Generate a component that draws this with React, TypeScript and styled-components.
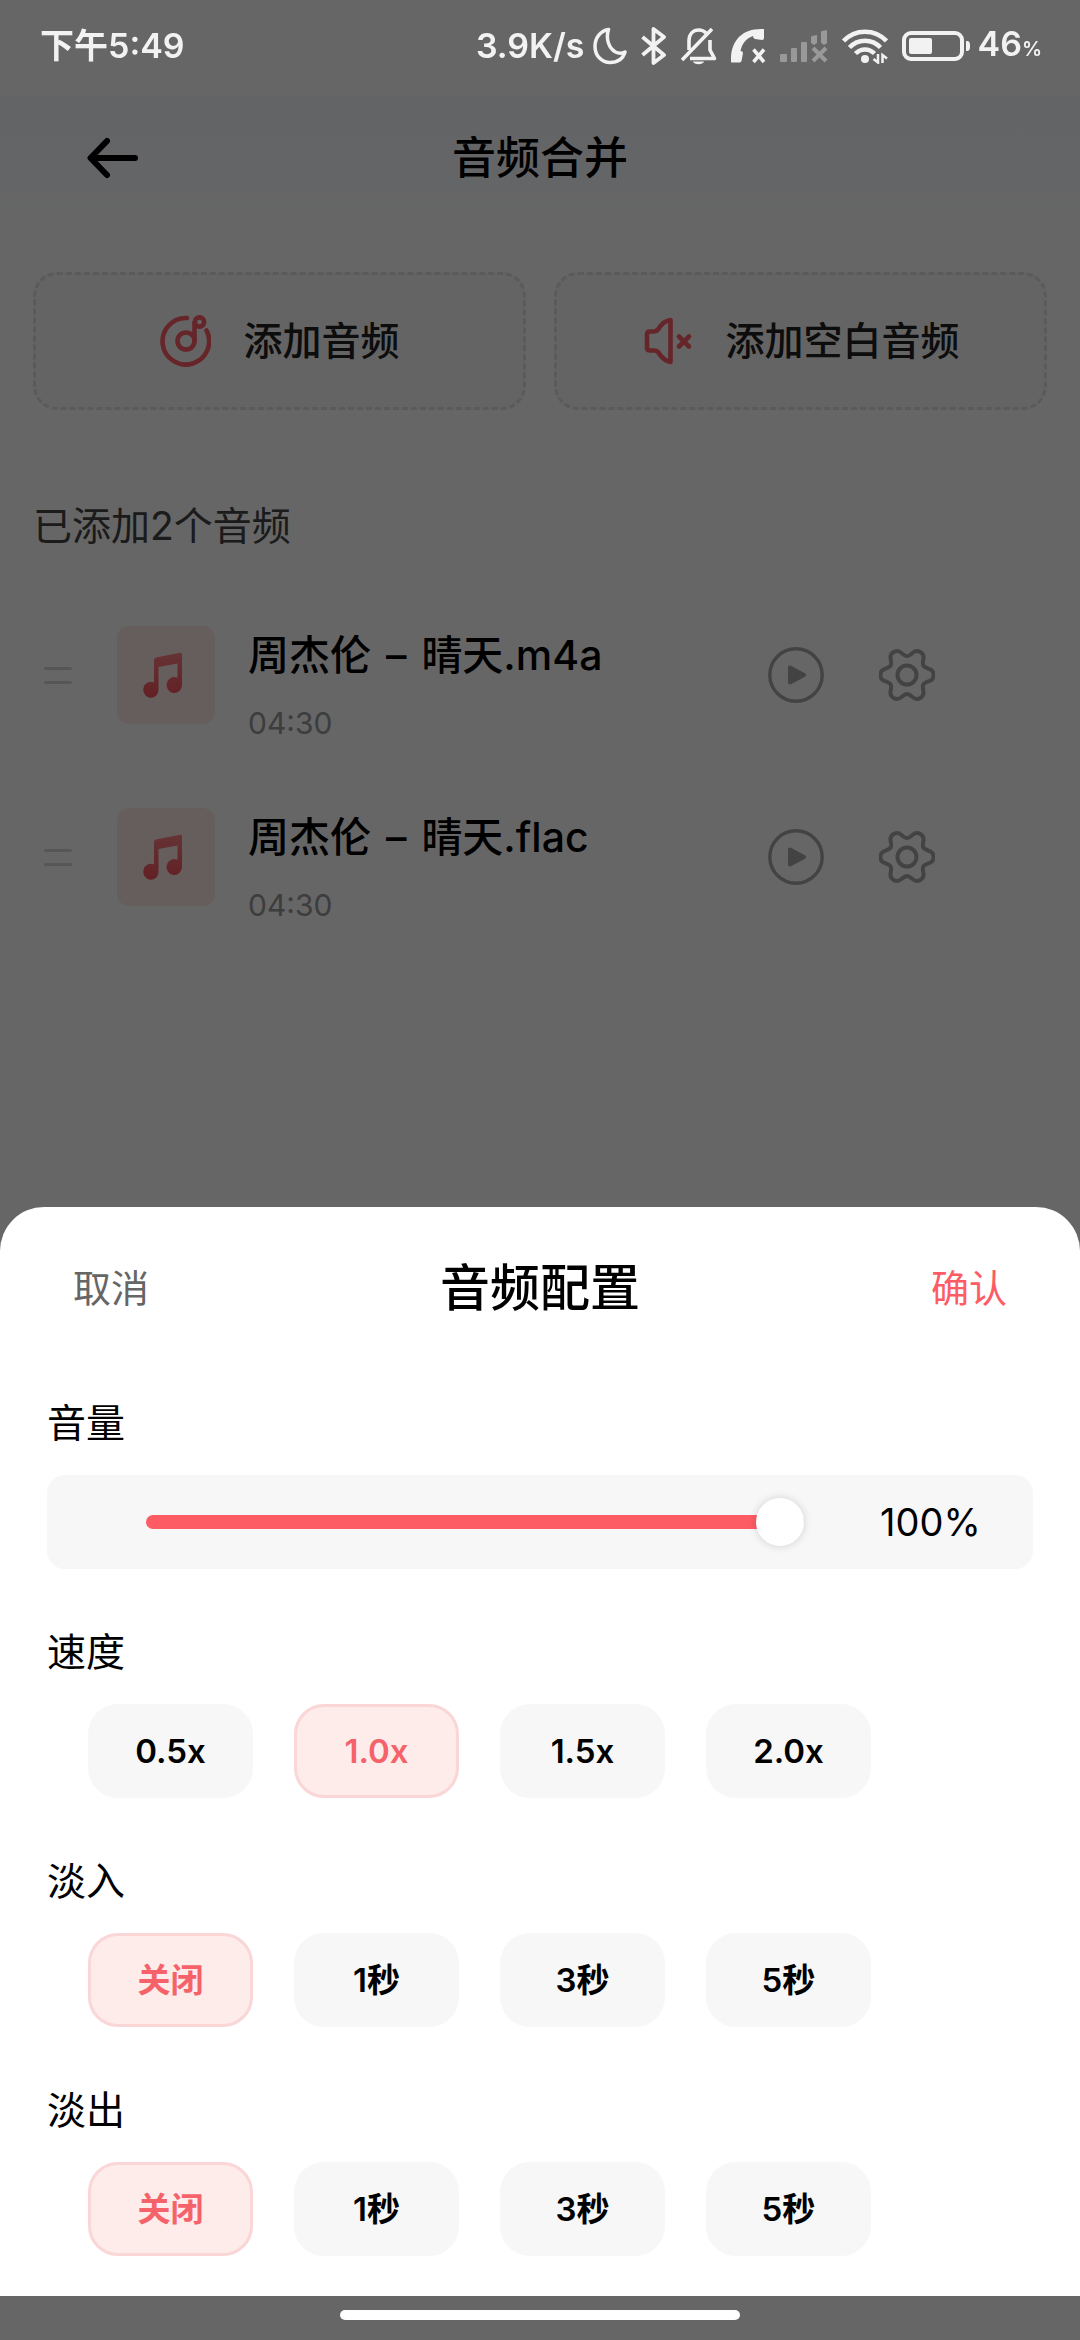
import React, { useState } from "react";
import styled, { createGlobalStyle } from "styled-components";

const accent = "#fe5c65";

const GlobalStyle = createGlobalStyle`
  *, *::before, *::after { box-sizing: border-box; }
  body {
    margin: 0;
    background: #fff;
    color: #000;
    font-family: Inter, "Noto Sans CJK SC", sans-serif;
  }
  button {
    padding: 0;
    border: 0;
    background: none;
    color: inherit;
    font: inherit;
    cursor: pointer;
  }
  svg { display: block; flex: none; }
`;

const Page = styled.div`
  min-height: 100vh;
`;

const StatusBar = styled.div`
  position: relative;
  z-index: 2;
  display: flex;
  align-items: center;
  justify-content: space-between;
  height: 96px;
  padding: 0 38px 0 40px;
  color: #f2f2f2;
  font-size: 34px;
  font-weight: 600;
  line-height: 48px;
`;

const StatusGroup = styled.div`
  display: flex;
  align-items: center;
  gap: 8px;
  padding-bottom: 4px;
`;

const StatusIcons = styled.div`
  display: flex;
  align-items: center;
  gap: 14px;
`;

const Percent = styled.span`
  font-size: 20px;
`;

const Header = styled.header`
  display: grid;
  grid-template-columns: 1fr auto 1fr;
  align-items: center;
  height: 120px;
  padding: 4px 87px 0;
  background: linear-gradient(#f8fbff, #fafcff 70%, #fff);
`;

const Title = styled.h1`
  margin: 0;
  font-size: 44px;
  font-weight: 500;
  line-height: 64px;
`;

const BackButton = styled.button`
  justify-self: start;
`;

const Content = styled.main`
  padding: 56px 33px 0;
`;

const AddRow = styled.div`
  display: grid;
  grid-template-columns: 1fr 1fr;
  gap: 28px;
`;

const AddButton = styled.button`
  display: flex;
  align-items: center;
  justify-content: center;
  gap: 32px;
  height: 138px;
  border: 3px dashed #e2e2e2;
  border-radius: 24px;
  background: #fafafa;
  color: #222;
  font-size: 39px;
  font-weight: 500;
  line-height: 56px;
`;

const CountLabel = styled.p`
  margin: 92px 0 34px;
  color: #444;
  font-size: 39px;
  line-height: 48px;
`;

const TrackList = styled.ul`
  margin: 0;
  padding: 0;
  list-style: none;
`;

const TrackRow = styled.li`
  display: flex;
  align-items: center;
  height: 182px;
  padding: 0 112px 0 11px;
`;

const Handle = styled.div`
  display: grid;
  gap: 11px;
  width: 28px;
  margin-right: 45px;

  &::before,
  &::after {
    content: "";
    height: 3px;
    border-radius: 2px;
    background: #d8d8d8;
  }
`;

const Cover = styled.div`
  display: grid;
  place-items: center;
  width: 98px;
  height: 98px;
  border-radius: 12px;
  background: #ffebe9;
`;

const TrackText = styled.div`
  flex: 1;
  min-width: 0;
  padding: 20px 0 0 33px;
`;

const TrackName = styled.div`
  font-size: 41px;
  font-weight: 500;
  line-height: 56px;
  white-space: nowrap;
`;

const Dash = styled.span`
  padding: 0 4px;
`;

const Duration = styled.div`
  margin-top: 20px;
  color: #999;
  font-size: 30px;
  line-height: 40px;
`;

const TrackActions = styled.div`
  display: flex;
  gap: 55px;
  color: #a8a8a8;
`;

const Overlay = styled.div`
  position: fixed;
  inset: 0;
  z-index: 1;
  display: flex;
  flex-direction: column;
  justify-content: flex-end;
  background: rgba(0, 0, 0, 0.6);
`;

const Sheet = styled.section`
  padding: 0 47px 40px;
  border-radius: 44px 44px 0 0;
  background: #fff;
`;

const SheetHeader = styled.div`
  display: grid;
  grid-template-columns: 1fr auto 1fr;
  align-items: center;
  height: 162px;
  margin-bottom: 30px;
  padding: 0 26px;
`;

const SheetTitle = styled.h2`
  margin: 0;
  font-size: 50px;
  font-weight: 500;
  line-height: 72px;
`;

const TextButton = styled.button<{ $primary?: boolean }>`
  justify-self: ${(p) => (p.$primary ? "end" : "start")};
  color: ${(p) => (p.$primary ? accent : "#666")};
  font-size: 38px;
  line-height: 56px;
`;

const Settings = styled.div`
  display: grid;
  gap: 59px;
`;

const Group = styled.fieldset`
  min-width: 0;
  margin: 0;
  padding: 0;
  border: 0;
`;

const GroupLabel = styled.legend`
  display: block;
  margin-bottom: 28px;
  padding: 0;
  font-size: 39px;
  line-height: 48px;
`;

const VolumeBox = styled.div`
  display: flex;
  align-items: center;
  height: 94px;
  padding: 0 55px 0 99px;
  border-radius: 18px;
  background: #f7f7f7;
`;

const Slider = styled.input`
  flex: 1;
  min-width: 0;
  height: 48px;
  margin: 0;
  appearance: none;
  background: none;

  &::-webkit-slider-runnable-track {
    height: 14px;
    border-radius: 7px;
    background: linear-gradient(90deg, ${accent} var(--fill), #e8e8e8 var(--fill));
  }

  &::-webkit-slider-thumb {
    appearance: none;
    width: 48px;
    height: 48px;
    margin-top: -17px;
    border-radius: 50%;
    background: #fff;
    box-shadow: 0 0 8px rgba(0, 0, 0, 0.16);
  }
`;

const VolumeValue = styled.output`
  width: 98px;
  margin-left: 76px;
  font-size: 38px;
  line-height: 48px;
  text-align: center;
  white-space: nowrap;
`;

const Chips = styled.div`
  display: flex;
  gap: 41px;
  padding-left: 41px;
`;

const Chip = styled.label<{ $active: boolean }>`
  display: grid;
  place-items: center;
  width: 165px;
  height: 94px;
  border: 3px solid ${(p) => (p.$active ? "#fad6d6" : "#f7f7f7")};
  border-radius: 30px;
  background: ${(p) => (p.$active ? "#feeceb" : "#f7f7f7")};
  color: ${(p) => (p.$active ? "#f5626a" : "#000")};
  font-size: 33px;
  font-weight: 600;
  line-height: 48px;
  cursor: pointer;
`;

const HiddenRadio = styled.input`
  position: absolute;
  opacity: 0;
  pointer-events: none;
`;

const NavBar = styled.div`
  display: flex;
  justify-content: center;
  height: 44px;
  padding-top: 14px;
`;

const HomeIndicator = styled.div`
  width: 37%;
  height: 10px;
  border-radius: 5px;
  background: #fff;
`;

const MoonIcon = () => (
  <svg width="34" height="38" viewBox="0 0 34 38" fill="none" stroke="currentColor" strokeWidth="3.500" strokeLinejoin="round">
    <path d="M15.500 2.500 C7 4 2 11 2 19.500 C2 29 9 35.500 17 35.500 C24.500 35.500 30 31.500 32 25 C29 26.500 25.500 26.500 22.500 25 C16 21.500 12.500 12 15.500 2.500 Z" />
  </svg>
);

const BluetoothIcon = () => (
  <svg width="26" height="38" viewBox="0 0 26 38" fill="none" stroke="currentColor" strokeWidth="3.800" strokeLinejoin="round">
    <path d="M1.500 10 L23 28 L12.500 36 V2 L23 10 L1.500 28" />
  </svg>
);

const BellOffIcon = () => (
  <svg width="36" height="38" viewBox="0 0 36 38" fill="none" stroke="currentColor" strokeWidth="3.600">
    <path d="M8 23 V14 C8 7 12 3 18 3 C21 3 23 4 25 6" />
    <path d="M29 13 V23 L33.500 31.500 H9" strokeLinejoin="round" />
    <path d="M1 33 L31 2" />
    <path d="M12 34.500 H23 C22 38 13 38 12 34.500 Z" fill="currentColor" stroke="none" />
  </svg>
);

const CallOffIcon = () => (
  <svg width="35" height="36" viewBox="0 0 35 36" fill="currentColor">
    <path d="M0 34 C-1 14 10 1 30 1 H33 V10 Q33 12 31 12 L24 11 Q22 10.500 22 8 C16 10 11 15 9.500 23 Q12 23 12 25 L10.500 33 Q10 34.500 8 34.500 H2 Q0 34.500 0 34 Z" />
    <path d="M22.500 21.500 L33 34 M33 21.500 L22.500 34" stroke="currentColor" strokeWidth="3.500" />
  </svg>
);

const SignalIcon = () => (
  <svg width="48" height="36" viewBox="0 0 48 36" fill="#999">
    <rect x="0" y="26" width="7" height="8" rx="1" />
    <rect x="11" y="20" width="6" height="14" rx="1" />
    <rect x="21" y="14" width="6" height="20" rx="1" />
    <path d="M31 9 Q31 8 32 8 L37 7 V15 L34 17 L31 15 Z" />
    <path d="M41 4 Q41 3 42 3 L47 2 V15 L44 17 L41 15 Z" />
    <path d="M33 20 L46 33 M46 20 L33 33" stroke="#999" strokeWidth="4" />
  </svg>
);

const WifiIcon = () => (
  <svg width="46" height="36" viewBox="0 0 46 36" fill="none" stroke="currentColor" strokeWidth="4.500">
    <path d="M1.500 13 C13 0.500 33 0.500 44.500 13" />
    <path d="M7.500 19.500 C16 10.500 30 10.500 38.500 19.500" />
    <path d="M13.500 25.500 C19 20 27 20 32.500 25.500" />
    <circle cx="23" cy="31" r="4" fill="currentColor" stroke="none" />
    <path d="M36 26 V34.500 L31.500 31 M40.500 35 V27 L45 30.500" strokeWidth="2.500" />
  </svg>
);

const BatteryIcon = () => (
  <svg width="68" height="30" viewBox="0 0 68 30" fill="none">
    <rect x="2" y="2" width="58" height="26" rx="7" stroke="currentColor" strokeWidth="4" />
    <rect x="7" y="7" width="23" height="16" rx="2" fill="currentColor" />
    <path d="M64 10 H65 Q68 10 68 14 V16 Q68 20 65 20 H64 Z" fill="currentColor" />
  </svg>
);

const BackIcon = () => (
  <svg width="52" height="42" viewBox="0 0 52 42" fill="none" stroke="#000" strokeWidth="6" strokeLinecap="round" strokeLinejoin="round">
    <path d="M48 21 H4 M20 4 L3.500 21 L20 38" />
  </svg>
);

const DiscIcon = () => (
  <svg width="52" height="52" viewBox="-1 0 52 52" fill="none" stroke={accent} strokeWidth="4.600" strokeLinecap="round">
    <path d="M27 3 A23.300 23.300 0 1 0 46.500 15.500" />
    <circle cx="26" cy="26" r="8.500" />
    <path d="M34.500 26 V7.500" />
    <circle cx="39.500" cy="7" r="4.600" />
  </svg>
);

const MuteIcon = () => (
  <svg width="52" height="52" viewBox="0 0 52 52" fill="none" stroke={accent} strokeWidth="4.600" strokeLinecap="round" strokeLinejoin="round">
    <path d="M29.500 5 V47 C23 46 19.500 41 17 37 Q15.500 35.500 13 35.500 H9 Q6 35.500 6 32.500 V19.500 Q6 16.500 9 16.500 H13 Q15.500 16.500 17 14.500 C19.500 10.500 23 5.500 29.500 5 Z" />
    <path d="M38 21.500 L48 31.500 M48 21.500 L38 31.500" />
  </svg>
);

const NoteIcon = () => (
  <svg width="46" height="46" viewBox="0 0 46 46">
    <defs>
      <linearGradient id="note" x1="0" y1="0" x2="0" y2="1">
        <stop offset="0" stopColor="#ff8084" />
        <stop offset="1" stopColor="#f7505a" />
      </linearGradient>
    </defs>
    <path
      fill="url(#note)"
      d="M11 8 Q11 6 13 5.500 L37 0.800 Q39 0.500 39 2.500 V33 A7.700 8 0 1 1 34.500 25.800 V11.500 L15.500 15 V37.500 A7.600 8 0 1 1 11 30.500 Z"
    />
  </svg>
);

const PlayIcon = () => (
  <svg width="56" height="56" viewBox="0 0 56 56" fill="none">
    <circle cx="28" cy="28" r="26.200" stroke="currentColor" strokeWidth="3.400" />
    <path d="M22 20.500 V35.500 L36 28 Z" fill="currentColor" stroke="currentColor" strokeWidth="4" strokeLinejoin="round" />
  </svg>
);

// Closed smooth outline: each tooth contributes two corners, each notch one inner point.
const gearOutline = (() => {
  const at = (deg: number, r: number) => {
    const a = (deg * Math.PI) / 180;
    return [28 + r * Math.cos(a), 28 + r * Math.sin(a)];
  };
  const pts: number[][] = [];
  for (let k = 0; k < 6; k++) {
    pts.push(at(60 * k - 10, 27), at(60 * k + 10, 27), at(60 * k + 24, 19), at(60 * k + 36, 19));
  }
  const mid = (a: number[], b: number[]) => `${((a[0] + b[0]) / 2).toFixed(2)} ${((a[1] + b[1]) / 2).toFixed(2)}`;
  let d = `M${mid(pts[pts.length - 1], pts[0])}`;
  pts.forEach((p, i) => {
    d += ` Q${p[0].toFixed(2)} ${p[1].toFixed(2)} ${mid(p, pts[(i + 1) % pts.length])}`;
  });
  return d + "Z";
})();

const GearIcon = () => (
  <svg width="56" height="56" viewBox="0 0 56 56" fill="none" stroke="currentColor" strokeWidth="4">
    <path d={gearOutline} />
    <circle cx="28" cy="28" r="9.500" />
  </svg>
);

const tracks = [
  { artist: "周杰伦", title: "晴天.m4a", duration: "04:30" },
  { artist: "周杰伦", title: "晴天.flac", duration: "04:30" },
];

const fadeOptions = ["关闭", "1秒", "3秒", "5秒"];

function ChoiceGroup(props: { label: string; name: string; options: string[]; initial: string }) {
  const [value, setValue] = useState(props.initial);
  return (
    <Group>
      <GroupLabel>{props.label}</GroupLabel>
      <Chips>
        {props.options.map((option) => (
          <Chip key={option} $active={option === value}>
            <HiddenRadio
              type="radio"
              name={props.name}
              value={option}
              checked={option === value}
              onChange={() => setValue(option)}
            />
            {option}
          </Chip>
        ))}
      </Chips>
    </Group>
  );
}

export default function App() {
  const [volume, setVolume] = useState(100);

  return (
    <>
      <GlobalStyle />
      <Page>
        <StatusBar>
          <StatusGroup>下午5:49</StatusGroup>
          <StatusGroup>
            <span>3.9K/s</span>
            <StatusIcons>
              <MoonIcon />
              <BluetoothIcon />
              <BellOffIcon />
              <CallOffIcon />
              <SignalIcon />
              <WifiIcon />
              <BatteryIcon />
            </StatusIcons>
            <span>
              46<Percent>%</Percent>
            </span>
          </StatusGroup>
        </StatusBar>
        <Header>
          <BackButton type="button" aria-label="返回">
            <BackIcon />
          </BackButton>
          <Title>音频合并</Title>
        </Header>
        <Content>
          <AddRow>
            <AddButton type="button">
              <DiscIcon />
              添加音频
            </AddButton>
            <AddButton type="button">
              <MuteIcon />
              添加空白音频
            </AddButton>
          </AddRow>
          <CountLabel>已添加2个音频</CountLabel>
          <TrackList>
            {tracks.map((track) => (
              <TrackRow key={track.title}>
                <Handle />
                <Cover>
                  <NoteIcon />
                </Cover>
                <TrackText>
                  <TrackName>
                    {track.artist} <Dash>–</Dash> {track.title}
                  </TrackName>
                  <Duration>{track.duration}</Duration>
                </TrackText>
                <TrackActions>
                  <button type="button" aria-label="播放">
                    <PlayIcon />
                  </button>
                  <button type="button" aria-label="设置">
                    <GearIcon />
                  </button>
                </TrackActions>
              </TrackRow>
            ))}
          </TrackList>
        </Content>
      </Page>
      <Overlay>
        <Sheet role="dialog" aria-labelledby="sheet-title">
          <SheetHeader>
            <TextButton type="button">取消</TextButton>
            <SheetTitle id="sheet-title">音频配置</SheetTitle>
            <TextButton type="button" $primary>
              确认
            </TextButton>
          </SheetHeader>
          <Settings>
            <Group>
              <GroupLabel as="label" htmlFor="volume">
                音量
              </GroupLabel>
              <VolumeBox>
                <Slider
                  id="volume"
                  type="range"
                  min={0}
                  max={100}
                  value={volume}
                  onChange={(e) => setVolume(Number(e.target.value))}
                  style={{ "--fill": `${volume}%` } as React.CSSProperties}
                />
                <VolumeValue htmlFor="volume">{volume}%</VolumeValue>
              </VolumeBox>
            </Group>
            <ChoiceGroup label="速度" name="speed" options={["0.5x", "1.0x", "1.5x", "2.0x"]} initial="1.0x" />
            <ChoiceGroup label="淡入" name="fade-in" options={fadeOptions} initial="关闭" />
            <ChoiceGroup label="淡出" name="fade-out" options={fadeOptions} initial="关闭" />
          </Settings>
        </Sheet>
        <NavBar>
          <HomeIndicator />
        </NavBar>
      </Overlay>
    </>
  );
}
